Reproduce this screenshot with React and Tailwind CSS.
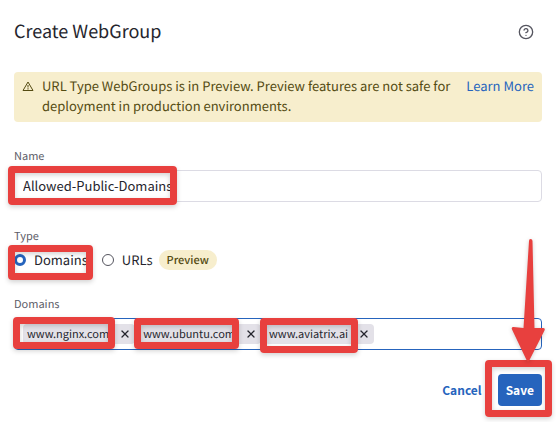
import { CircleHelp, X } from "lucide-react";

const domains = ["www.nginx.com", "www.ubuntu.com", "www.aviatrix.ai"];

const tagHighlights = [
  "-left-[10px] -top-[7px] h-8 w-[102px]",
  "-left-[5px] -top-[6px] h-[31px] w-[105px]",
  "-left-[5px] -top-[6px] h-[35px] w-[98px]",
];

function Highlight({ className }) {
  return (
    <span
      aria-hidden="true"
      className={`pointer-events-none absolute z-10 rounded-[4px] border-[7px] border-[#e8403e] shadow-[0_2px_5px_rgba(0,0,0,0.18),inset_0_2px_5px_rgba(0,0,0,0.18)] ${className}`}
    />
  );
}

function Arrow() {
  return (
    <svg
      aria-hidden="true"
      viewBox="0 0 34 123"
      className="pointer-events-none absolute -top-[135px] -right-[3px] z-20 h-[123px] w-[34px] drop-shadow-[0_1px_2px_rgba(0,0,0,0.2)]"
    >
      <path
        d="M18 2Q18 0 19.500 0Q21.500 0 21.500 2L23.500 89L32 89Q34.500 89 33.500 91.500L18.500 121Q17 124 15.500 121L1 90.500Q0 88 2.500 88L12.500 89Z"
        fill="#e8403e"
      />
    </svg>
  );
}

export default function App() {
  return (
    <main className="bg-white px-[14px] pt-[17px] pb-4 font-['Noto_Sans_CJK_SC','Noto_Sans',sans-serif] text-[13px] leading-5 text-[#25252d] [text-rendering:geometricPrecision]">
      <header className="flex items-center justify-between pr-2">
        <h1 className="text-[18px] leading-7">Create WebGroup</h1>
        <button type="button" aria-label="Help" className="mt-0.5 text-[#55555f]">
          <CircleHelp size={16} strokeWidth={2} />
        </button>
      </header>

      <section className="mt-[27px] flex items-start rounded bg-[#f7eecd] pt-1 pr-2 pb-1.5 pl-2 text-[#544b12]">
        <svg
          aria-hidden="true"
          viewBox="0 0 12 12"
          className="mt-1 size-3 shrink-0"
          fill="none"
          stroke="currentColor"
        >
          <path d="M6 2L11 10.500H1Z" strokeWidth="1" />
          <path d="M6 5V7.500M6 8.200V9.500" strokeWidth="1" />
        </svg>
        <p className="ml-2 max-w-[412px] flex-1">
          URL Type WebGroups is in Preview. Preview features are not safe for
          deployment in production environments.
        </p>
        <a href="#learn-more" className="ml-auto whitespace-nowrap text-[#2664bd]">
          Learn More
        </a>
      </section>

      <form>
        <div className="relative mt-6">
          <label htmlFor="name" className="block text-[11px] text-[#5d5d68]">
            Name
          </label>
          <input
            id="name"
            defaultValue="Allowed-Public-Domains"
            className="mt-1 block h-8 w-full rounded border border-[#dcdbe4] bg-white px-2 pb-0.5 outline-none"
          />
          <Highlight className="-left-[6px] top-5 h-[39px] w-[169px]" />
        </div>

        <div
          role="radiogroup"
          aria-labelledby="type-label"
          className="relative mt-6"
        >
          <p id="type-label" className="text-[11px] text-[#5d5d68]">
            Type
          </p>
          <div className="mt-1 flex items-center">
            <label className="flex items-center gap-2">
              <input
                type="radio"
                name="type"
                defaultChecked
                className="size-3 appearance-none rounded-full border border-[#55555f] checked:border-[3px] checked:border-[#2664bd]"
              />
              Domains
            </label>
            <label className="ml-[14px] flex items-center gap-2">
              <input
                type="radio"
                name="type"
                className="size-3 appearance-none rounded-full border border-[#55555f] checked:border-[3px] checked:border-[#2664bd]"
              />
              URLs
            </label>
            <span className="ml-1.5 rounded-full bg-[#f7eecd] px-2 text-[11px] font-medium text-[#544b12]">
              Preview
            </span>
          </div>
          <Highlight className="-left-[6px] top-[19px] h-[35px] w-[85px]" />
        </div>

        <div className="mt-6">
          <label htmlFor="domains" className="block text-[11px] text-[#5d5d68]">
            Domains
          </label>
          <div className="mt-1 flex h-8 items-center gap-1 rounded border border-[#2664bd] px-2">
            {domains.map((domain, i) => (
              <span
                key={domain}
                className="relative flex h-5 shrink-0 items-center rounded bg-[#e3e1e8] px-1 text-[11px]"
              >
                {domain}
                <button type="button" aria-label={`Remove ${domain}`} className="ml-2.5">
                  <X size={12} strokeWidth={2.5} />
                </button>
                <Highlight className={tagHighlights[i]} />
              </span>
            ))}
            <input id="domains" className="min-w-0 flex-1 outline-none" />
          </div>
        </div>

        <footer className="mt-6 flex items-center justify-end gap-4">
          <button type="button" className="h-8 text-[12px] font-bold text-[#2664bd]">
            Cancel
          </button>
          <div className="relative">
            <button type="submit" className="h-8 rounded bg-[#2664bd] px-2 text-[12px] font-bold text-white">
              Save
            </button>
            <Highlight className="-top-[14px] -right-[10px] h-[57px] w-[67px]" />
            <Arrow />
          </div>
        </footer>
      </form>
    </main>
  );
}
